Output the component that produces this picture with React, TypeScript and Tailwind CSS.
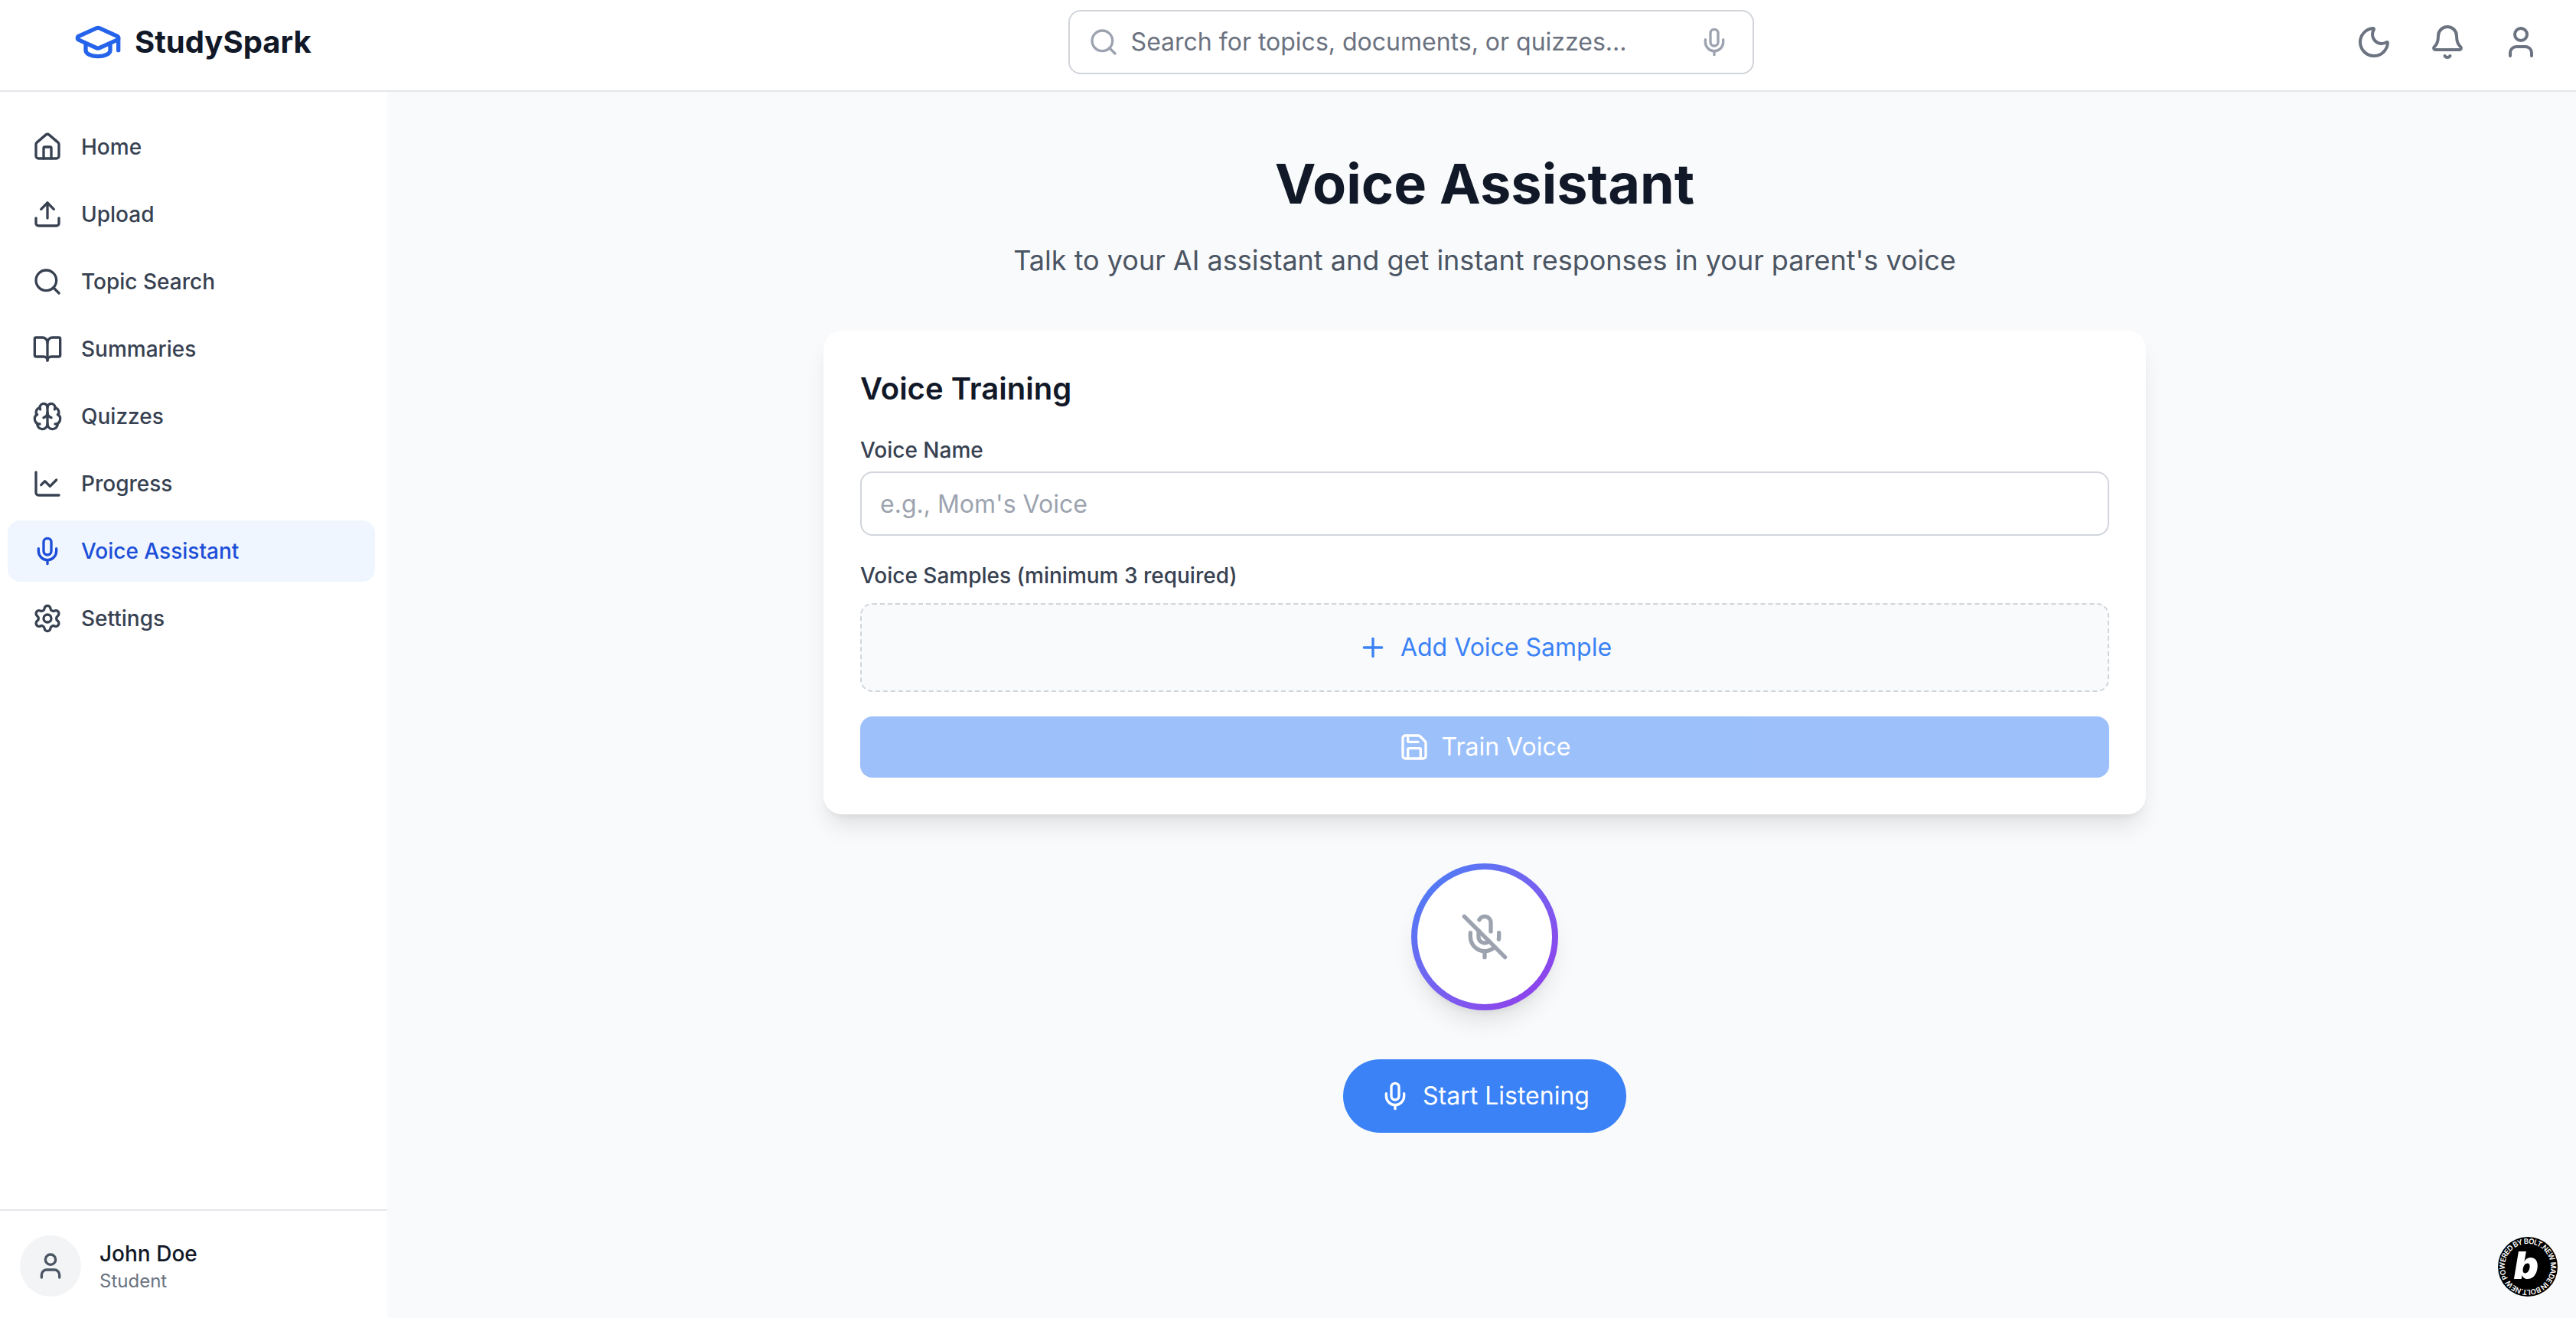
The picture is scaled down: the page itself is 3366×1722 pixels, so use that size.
import { useState } from 'react'
import {
  Bell,
  BookOpen,
  Brain,
  ChartLine,
  GraduationCap,
  House,
  Mic,
  MicOff,
  Moon,
  Plus,
  Save,
  Search,
  Settings,
  Upload,
  User,
} from 'lucide-react'

const navItems = [
  { label: 'Home', icon: House },
  { label: 'Upload', icon: Upload },
  { label: 'Topic Search', icon: Search },
  { label: 'Summaries', icon: BookOpen },
  { label: 'Quizzes', icon: Brain },
  { label: 'Progress', icon: ChartLine },
  { label: 'Voice Assistant', icon: Mic, active: true },
  { label: 'Settings', icon: Settings },
]

function Header() {
  return (
    <header className="flex h-[120px] shrink-0 items-center border-b-2 border-[#e5e7eb] bg-white px-[48px] pb-[8px]">
      <div className="ml-[48px] flex items-center gap-[16px]">
        <GraduationCap className="h-[64px] w-[64px] text-[#2563eb]" />
        <span className="text-[40px] leading-[56px] font-bold text-[#111827]">StudySpark</span>
      </div>
      <div className="ml-[989px] flex h-[84px] w-[896px] items-center gap-[16px] rounded-[16px] border-2 border-[#d1d5db] bg-white pr-[30px] pl-[24px]">
        <Search className="h-[40px] w-[40px] shrink-0 text-[#9ca3af]" />
        <input
          placeholder="Search for topics, documents, or quizzes..."
          className="min-w-0 flex-1 text-[32px] leading-[48px] outline-none placeholder:text-[#6b7280]"
        />
        <Mic className="h-[40px] w-[40px] shrink-0 text-[#9ca3af]" />
      </div>
      <div className="ml-auto flex items-center gap-[48px] text-[#6b7280]">
        <Moon className="h-[48px] w-[48px]" />
        <Bell className="h-[48px] w-[48px]" />
        <User className="h-[48px] w-[48px]" />
      </div>
    </header>
  )
}

function Sidebar() {
  return (
    <aside className="flex w-[506px] shrink-0 flex-col bg-white">
      <nav className="flex flex-1 flex-col gap-[8px] pt-[32px] pr-[16px] pl-[10px]">
        {navItems.map(({ label, icon: Icon, active }) => (
          <a
            key={label}
            className={
              active
                ? 'flex h-[80px] items-center gap-[24px] rounded-[16px] bg-[#eff6ff] px-[32px] text-[28px] leading-[40px] font-medium text-[#1d4ed8]'
                : 'flex h-[80px] items-center gap-[24px] rounded-[16px] px-[32px] text-[28px] leading-[40px] font-medium text-[#374151]'
            }
          >
            <Icon className="h-[40px] w-[40px]" />
            {label}
          </a>
        ))}
      </nav>
      <div className="flex h-[142px] shrink-0 gap-[24px] border-t-2 border-[#e5e7eb] pt-[32px] pl-[26px]">
        <div className="flex h-[80px] w-[80px] items-center justify-center rounded-full bg-[#f3f4f6]">
          <User className="h-[40px] w-[40px] text-[#4b5563]" />
        </div>
        <div className="pt-[4px]">
          <p className="text-[28px] leading-[40px] font-medium text-[#111827]">John Doe</p>
          <p className="text-[24px] leading-[32px] text-[#6b7280]">Student</p>
        </div>
      </div>
    </aside>
  )
}

function VoiceTraining() {
  const [voiceName, setVoiceName] = useState('')

  return (
    <section className="w-[1728px] rounded-[24px] bg-white p-[48px] shadow-[0_20px_30px_-6px_rgb(0_0_0_/_0.1),0_8px_12px_-8px_rgb(0_0_0_/_0.1)]">
      <h2 className="mb-[32px] text-[40px] leading-[56px] font-semibold text-[#111827]">Voice Training</h2>
      <label className="mb-[8px] block text-[28px] leading-[40px] font-medium text-[#374151]">Voice Name</label>
      <input
        value={voiceName}
        onChange={(e) => setVoiceName(e.target.value)}
        placeholder="e.g., Mom's Voice"
        className="mb-[32px] block h-[84px] w-full rounded-[16px] border-2 border-[#d1d5db] px-[24px] text-[32px] leading-[48px] outline-none placeholder:text-[#9ca3af]"
      />
      <label className="mb-[16px] block text-[28px] leading-[40px] font-medium text-[#374151]">
        Voice Samples (minimum 3 required)
      </label>
      <button className="mb-[32px] flex h-[116px] w-full items-center justify-center gap-[16px] rounded-[16px] border-2 border-dashed border-[#d1d5db] bg-[#f9fafb] text-[32px] leading-[48px] text-[#3b82f6]">
        <Plus className="h-[40px] w-[40px]" />
        Add Voice Sample
      </button>
      <button
        disabled
        className="flex h-[80px] w-full items-center justify-center gap-[16px] rounded-[16px] bg-[#3b82f6] text-[32px] leading-[48px] text-white opacity-50"
      >
        <Save className="h-[40px] w-[40px]" />
        Train Voice
      </button>
    </section>
  )
}

function BoltBadge() {
  return (
    <svg viewBox="0 0 80 80" className="absolute right-[23px] bottom-[27px] h-[80px] w-[80px]">
      <defs>
        <path id="badge-ring" d="M14 55A30 30 0 1 1 66 25A30 30 0 1 1 14 55" />
      </defs>
      <circle cx="40" cy="40" r="39" fill="#000" />
      <text fill="#fff" fontSize="9.5" fontWeight="600" fontFamily="Inter, sans-serif">
        <textPath href="#badge-ring" textLength="186">
          POWERED BY BOLT.NEW MADE IN BOLT.NEW
        </textPath>
      </text>
      <text
        x="38"
        y="56"
        textAnchor="middle"
        fill="#fff"
        fontSize="50"
        fontWeight="900"
        fontStyle="italic"
        fontFamily="Inter, sans-serif"
      >
        b
      </text>
    </svg>
  )
}

export default function App() {
  return (
    <div className="relative flex h-[1722px] flex-col overflow-hidden bg-[#f9fafb] font-[Inter,sans-serif]">
      <Header />
      <div className="flex min-h-0 flex-1">
        <Sidebar />
        <main className="flex flex-1 flex-col items-center pt-[80px] pl-[8px]">
          <h1 className="mb-[32px] text-[72px] leading-[80px] font-bold text-[#111827]">Voice Assistant</h1>
          <p className="mb-[64px] text-[36px] leading-[56px] text-[#4b5563]">
            Talk to your AI assistant and get instant responses in your parent's voice
          </p>
          <VoiceTraining />
          <div className="mt-[64px] rounded-full bg-gradient-to-br from-[#3b82f6] to-[#9333ea] p-[8px] shadow-[0_20px_30px_-6px_rgb(0_0_0_/_0.1),0_8px_12px_-8px_rgb(0_0_0_/_0.1)]">
            <div className="flex h-[176px] w-[176px] items-center justify-center rounded-full bg-white">
              <MicOff className="h-[64px] w-[64px] text-[#9ca3af]" />
            </div>
          </div>
          <button className="mt-[64px] flex h-[96px] items-center gap-[16px] rounded-full bg-[#3b82f6] px-[48px] text-[32px] leading-[48px] text-white">
            <Mic className="h-[40px] w-[40px]" />
            Start Listening
          </button>
        </main>
      </div>
      <BoltBadge />
    </div>
  )
}
